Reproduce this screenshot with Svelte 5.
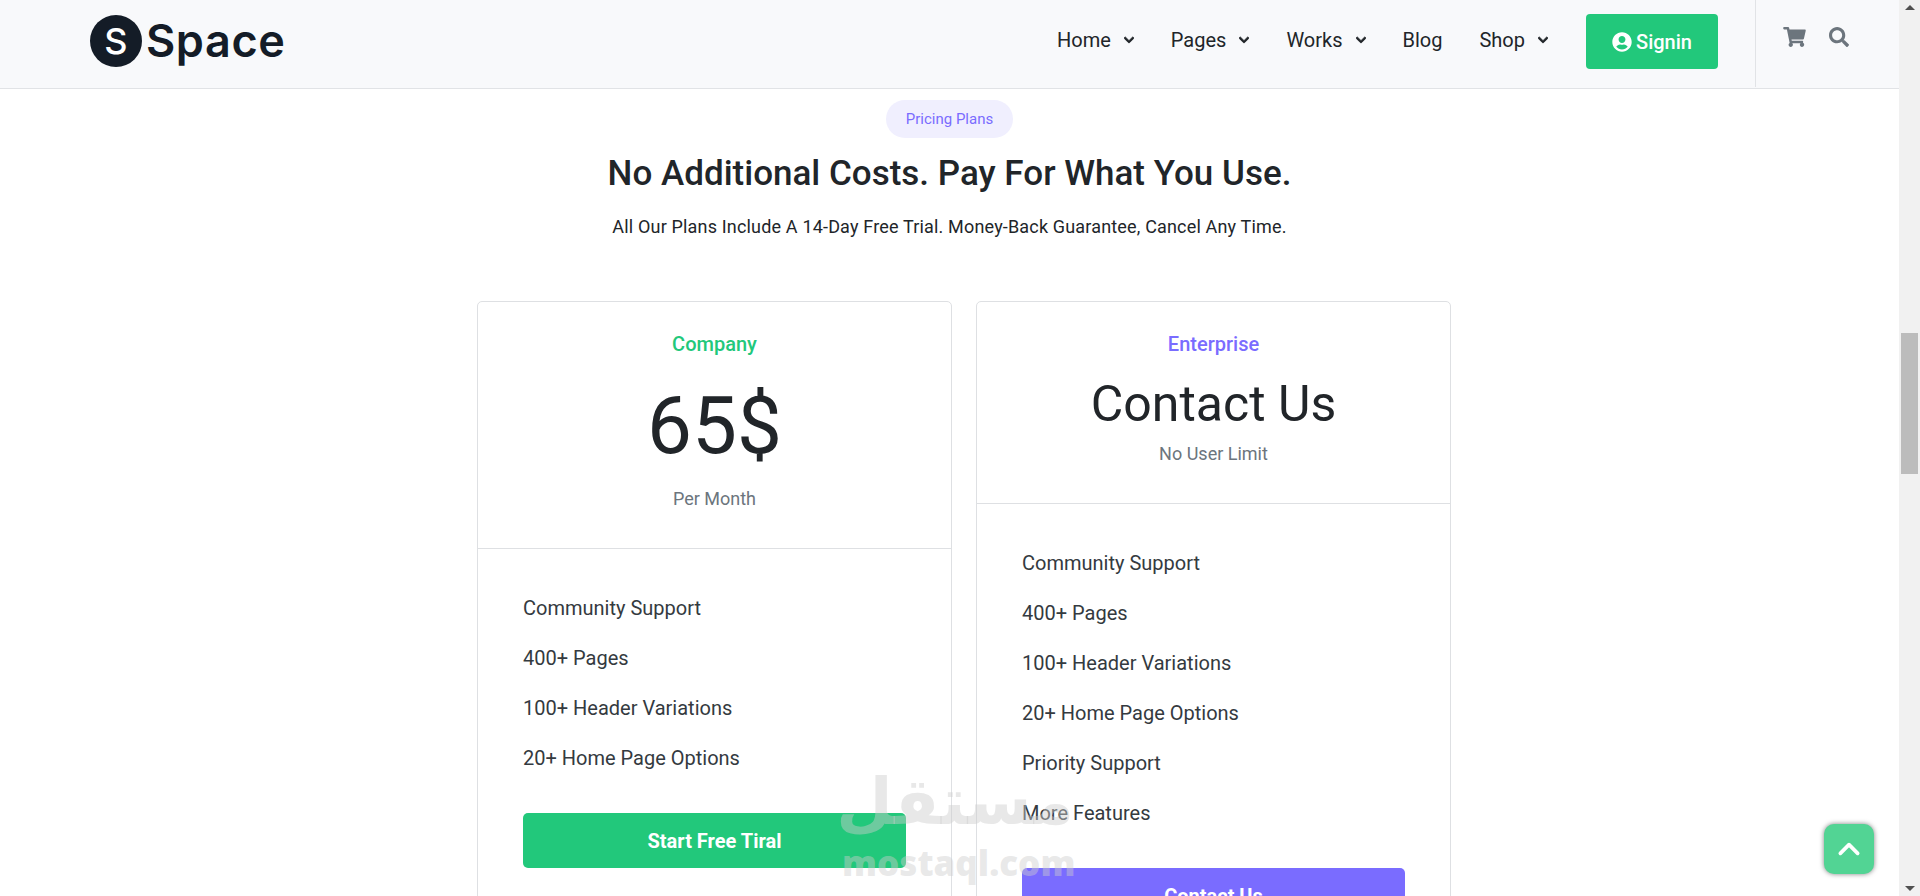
<script>
  const navItems = [
    { label: 'Home', caret: true },
    { label: 'Pages', caret: true },
    { label: 'Works', caret: true },
    { label: 'Blog', caret: false },
    { label: 'Shop', caret: true }
  ];

  const plans = [
    {
      name: 'Company',
      price: '65$',
      note: 'Per Month',
      big: true,
      accent: 'green',
      cta: 'Start Free Tiral',
      features: ['Community Support', '400+ Pages', '100+ Header Variations', '20+ Home Page Options']
    },
    {
      name: 'Enterprise',
      price: 'Contact Us',
      note: 'No User Limit',
      big: false,
      accent: 'purple',
      cta: 'Contact Us',
      features: ['Community Support', '400+ Pages', '100+ Header Variations', '20+ Home Page Options', 'Priority Support', 'More Features']
    }
  ];
</script>

<div class="page">
  <main class="main">
    <header class="topbar">
      <a class="logo" href="#top">
        <span class="logo-mark">S</span>
        <span class="logo-text">Space</span>
      </a>

      <nav class="nav">
        {#each navItems as item}
          <a class="nav-link" href="#top">
            {item.label}
            {#if item.caret}
              <svg class="caret" viewBox="0 0 448 512" aria-hidden="true"><path d="M207.029 381.476L12.686 187.132c-9.373-9.373-9.373-24.569 0-33.941l22.667-22.667c9.357-9.357 24.522-9.375 33.901-.04L224 284.505l154.745-154.021c9.379-9.335 24.544-9.317 33.901.04l22.667 22.667c9.373 9.373 9.373 24.569 0 33.941L240.971 381.476c-9.373 9.372-24.569 9.372-33.942 0z"/></svg>
            {/if}
          </a>
        {/each}
      </nav>

      <a class="signin" href="#top">
        <svg class="user" viewBox="0 0 496 512" aria-hidden="true"><path d="M248 8C111 8 0 119 0 256s111 248 248 248 248-111 248-248S385 8 248 8zm0 96c48.6 0 88 39.4 88 88s-39.4 88-88 88-88-39.4-88-88 39.4-88 88-88zm0 344c-58.7 0-111.3-26.6-146.5-68.2 18.8-35.4 55.6-59.8 98.5-59.8 2.4 0 4.8.4 7.1 1.1 13 4.2 26.6 6.9 40.9 6.9 14.3 0 28-2.7 40.9-6.9 2.3-.7 4.7-1.1 7.1-1.1 42.9 0 79.7 24.4 98.5 59.8C359.3 421.4 306.7 448 248 448z"/></svg>
        Signin
      </a>

      <div class="tools">
        <svg class="cart" viewBox="0 0 576 512" aria-hidden="true"><path d="M528.12 301.319l47.273-208C578.806 78.301 567.391 64 551.99 64H159.208l-9.166-44.81C147.758 8.021 137.93 0 126.529 0H24C10.745 0 0 10.745 0 24v16c0 13.255 10.745 24 24 24h69.883l70.248 343.435C147.325 417.1 136 435.222 136 456c0 30.928 25.072 56 56 56s56-25.072 56-56c0-15.674-6.447-29.835-16.824-40h209.647C430.447 426.165 424 440.326 424 456c0 30.928 25.072 56 56 56s56-25.072 56-56c0-22.172-12.888-41.332-31.579-50.405l5.517-24.276c3.413-15.018-8.002-29.319-23.403-29.319H218.117l-6.545-32h293.145c11.206 0 20.92-7.754 23.403-18.681z"/></svg>
        <svg class="search" viewBox="0 0 512 512" aria-hidden="true"><path d="M505 442.7L405.3 343c-4.5-4.5-10.6-7-17-7H372c27.6-35.3 44-79.7 44-128C416 93.1 322.9 0 208 0S0 93.1 0 208s93.1 208 208 208c48.3 0 92.7-16.4 128-44v16.3c0 6.4 2.5 12.5 7 17l99.7 99.7c9.4 9.4 24.6 9.4 33.9 0l28.3-28.3c9.4-9.4 9.4-24.5.1-33.9zM208 336c-70.7 0-128-57.2-128-128 0-70.7 57.2-128 128-128 70.7 0 128 57.2 128 128 0 70.7-57.2 128-128 128z"/></svg>
      </div>
    </header>

    <section class="pricing">
      <span class="pill">Pricing Plans</span>
      <h2 class="title">No Additional Costs. Pay For What You Use.</h2>
      <p class="subtitle">All Our Plans Include A 14-Day Free Trial. Money-Back Guarantee, Cancel Any Time.</p>

      <div class="cards">
        {#each plans as plan}
          <article class="card">
            <div class="card-head">
              <div class="plan-name {plan.accent}">{plan.name}</div>
              <div class="price" class:big={plan.big}>{plan.price}</div>
              <div class="note" class:big={plan.big}>{plan.note}</div>
            </div>
            <div class="card-body">
              <ul class="features">
                {#each plan.features as feature}
                  <li>{feature}</li>
                {/each}
              </ul>
              <a class="cta {plan.accent}" href="#top">{plan.cta}</a>
            </div>
          </article>
        {/each}
      </div>
    </section>

    <!-- mostaql watermark sits over the page -->
    <div class="watermark">
      <div class="wm-ar" dir="rtl" lang="ar">مستقل</div>
      <div class="wm-en">mostaql.com</div>
    </div>

    <a class="to-top" href="#top" aria-label="Back to top">
      <svg viewBox="0 0 24 24" aria-hidden="true"><path d="M4 16l8-8 8 8"/></svg>
    </a>
  </main>

  <div class="scrollbar">
    <span class="arrow up"></span>
    <div class="track"><div class="thumb"></div></div>
    <span class="arrow down"></span>
  </div>
</div>

<style>
  :global(body) {
    margin: 0;
    background: #fff;
  }
  * {
    box-sizing: border-box;
  }
  a {
    text-decoration: none;
    color: inherit;
  }
  .page {
    display: flex;
    width: 1920px;
    height: 896px;
    overflow: hidden;
    font-family: Roboto, "Liberation Sans", sans-serif;
    color: #212529;
  }
  .main {
    position: relative;
    flex: 1;
    min-width: 0;
    overflow: hidden;
  }

  .topbar {
    display: flex;
    align-items: center;
    height: 89px;
    padding-left: 90px;
    background: #f8f9fb;
    border-bottom: 1px solid #e1e3e6;
  }
  .logo {
    display: flex;
    align-items: center;
    gap: 4px;
    margin-right: auto;
    margin-top: -7px;
  }
  .logo-mark {
    display: flex;
    align-items: center;
    justify-content: center;
    width: 52px;
    height: 52px;
    border-radius: 50%;
    background: #141c27;
    color: #fff;
    font: 500 36px Inter, sans-serif;
  }
  .logo-text {
    font: 600 45px/52px Inter, sans-serif;
    color: #141c27;
    letter-spacing: 0.6px;
  }
  .nav {
    display: flex;
    gap: 37px;
    margin-top: -8px;
  }
  .nav-link {
    display: flex;
    align-items: center;
    gap: 13px;
    font-size: 20px;
    line-height: 27px;
    color: #212529;
  }
  .caret {
    width: 10px;
    height: 12px;
    fill: #212529;
    stroke: #212529;
    stroke-width: 40;
  }
  .signin {
    display: flex;
    align-items: center;
    justify-content: center;
    gap: 4px;
    width: 132px;
    height: 55px;
    margin: -5px 37px 0 38px;
    border-radius: 4px;
    background: #22c87b;
    color: #fff;
    font-size: 20px;
    font-weight: 500;
  }
  .user {
    width: 20px;
    height: 20px;
    fill: #fff;
  }
  .tools {
    display: flex;
    align-items: flex-start;
    gap: 23px;
    align-self: stretch;
    width: 144px;
    margin-bottom: 1px;
    padding: 27px 0 0 27px;
    border-left: 1px solid #e1e3e6;
  }
  .cart {
    width: 23px;
    height: 20px;
    fill: #6c757d;
  }
  .search {
    width: 20px;
    height: 20px;
    fill: #6c757d;
  }

  .pricing {
    display: flex;
    flex-direction: column;
    align-items: center;
    padding-top: 11px;
  }
  .pill {
    display: flex;
    align-items: center;
    height: 38px;
    padding: 0 20px;
    border-radius: 19px;
    background: #f0effe;
    color: #7a6cff;
    font-size: 15px;
  }
  .title {
    margin: 15px 0 0;
    font-size: 35px;
    font-weight: 500;
    line-height: 42px;
    color: #212529;
  }
  .subtitle {
    margin: 18px 0 0;
    font-size: 18px;
    letter-spacing: 0.17px;
    line-height: 27px;
    color: #212529;
  }
  .cards {
    display: flex;
    align-items: flex-start;
    gap: 24px;
    align-self: flex-start;
    margin: 61px 0 0 477px;
  }
  .card {
    width: 475px;
    border: 1px solid #dee0e3;
    border-radius: 5px;
  }
  .card-head {
    padding: 29px 45px 36px;
    text-align: center;
    border-bottom: 1px solid #dee0e3;
  }
  .plan-name {
    font-size: 20px;
    font-weight: 500;
    line-height: 27px;
  }
  .plan-name.green {
    color: #22c87b;
  }
  .plan-name.purple {
    color: #7a6cff;
  }
  .price {
    margin-top: 17px;
    font-size: 50px;
    font-weight: 400;
    line-height: 58px;
    color: #212529;
  }
  .price.big {
    margin-top: 20px;
    font-size: 80px;
    line-height: 96px;
  }
  .note {
    margin-top: 7px;
    font-size: 18px;
    line-height: 27px;
    color: #6c757d;
  }
  .note.big {
    margin-top: 11px;
  }
  .card-body {
    padding: 34px 45px 40px;
  }
  .features {
    margin: 0 0 30px;
    padding: 0;
    list-style: none;
  }
  .features li {
    display: flex;
    align-items: center;
    height: 50px;
    font-size: 20px;
    color: #343a40;
  }
  .cta {
    display: flex;
    align-items: center;
    justify-content: center;
    height: 55px;
    border-radius: 5px;
    color: #fff;
    font-size: 20px;
    font-weight: 700;
  }
  .cta.green {
    background: #22c87b;
  }
  .cta.purple {
    background: #7a6cff;
  }

  .watermark {
    position: absolute;
    left: 842px;
    top: 758px;
    width: 232px;
    text-align: center;
    color: rgba(205, 205, 205, 0.45);
    pointer-events: none;
  }
  .wm-ar {
    font: 700 65px/88px "DejaVu Sans", sans-serif;
  }
  .wm-en {
    font: 800 35px/34px "Open Sans", sans-serif;
  }

  .to-top {
    position: absolute;
    left: 1824px;
    top: 824px;
    display: flex;
    align-items: center;
    justify-content: center;
    width: 50px;
    height: 50px;
    border-radius: 10px;
    background: #52d494;
    box-shadow: 0 0 5px rgba(0, 0, 0, 0.5);
  }
  .to-top svg {
    width: 26px;
    height: 26px;
    fill: none;
    stroke: #fff;
    stroke-width: 3.4;
    stroke-linecap: round;
    stroke-linejoin: round;
  }

  .scrollbar {
    display: flex;
    flex-direction: column;
    align-items: center;
    width: 21px;
    background: #f1f1f1;
  }
  .arrow {
    flex: none;
    width: 0;
    height: 0;
    margin: 5px 0;
    border-left: 5px solid transparent;
    border-right: 5px solid transparent;
  }
  .arrow.up {
    border-bottom: 5px solid #505050;
  }
  .arrow.down {
    border-top: 5px solid #505050;
  }
  .track {
    flex: 1;
    width: 100%;
    padding: 318px 2px 0;
  }
  .thumb {
    height: 141px;
    background: #bcbcbc;
  }
</style>
